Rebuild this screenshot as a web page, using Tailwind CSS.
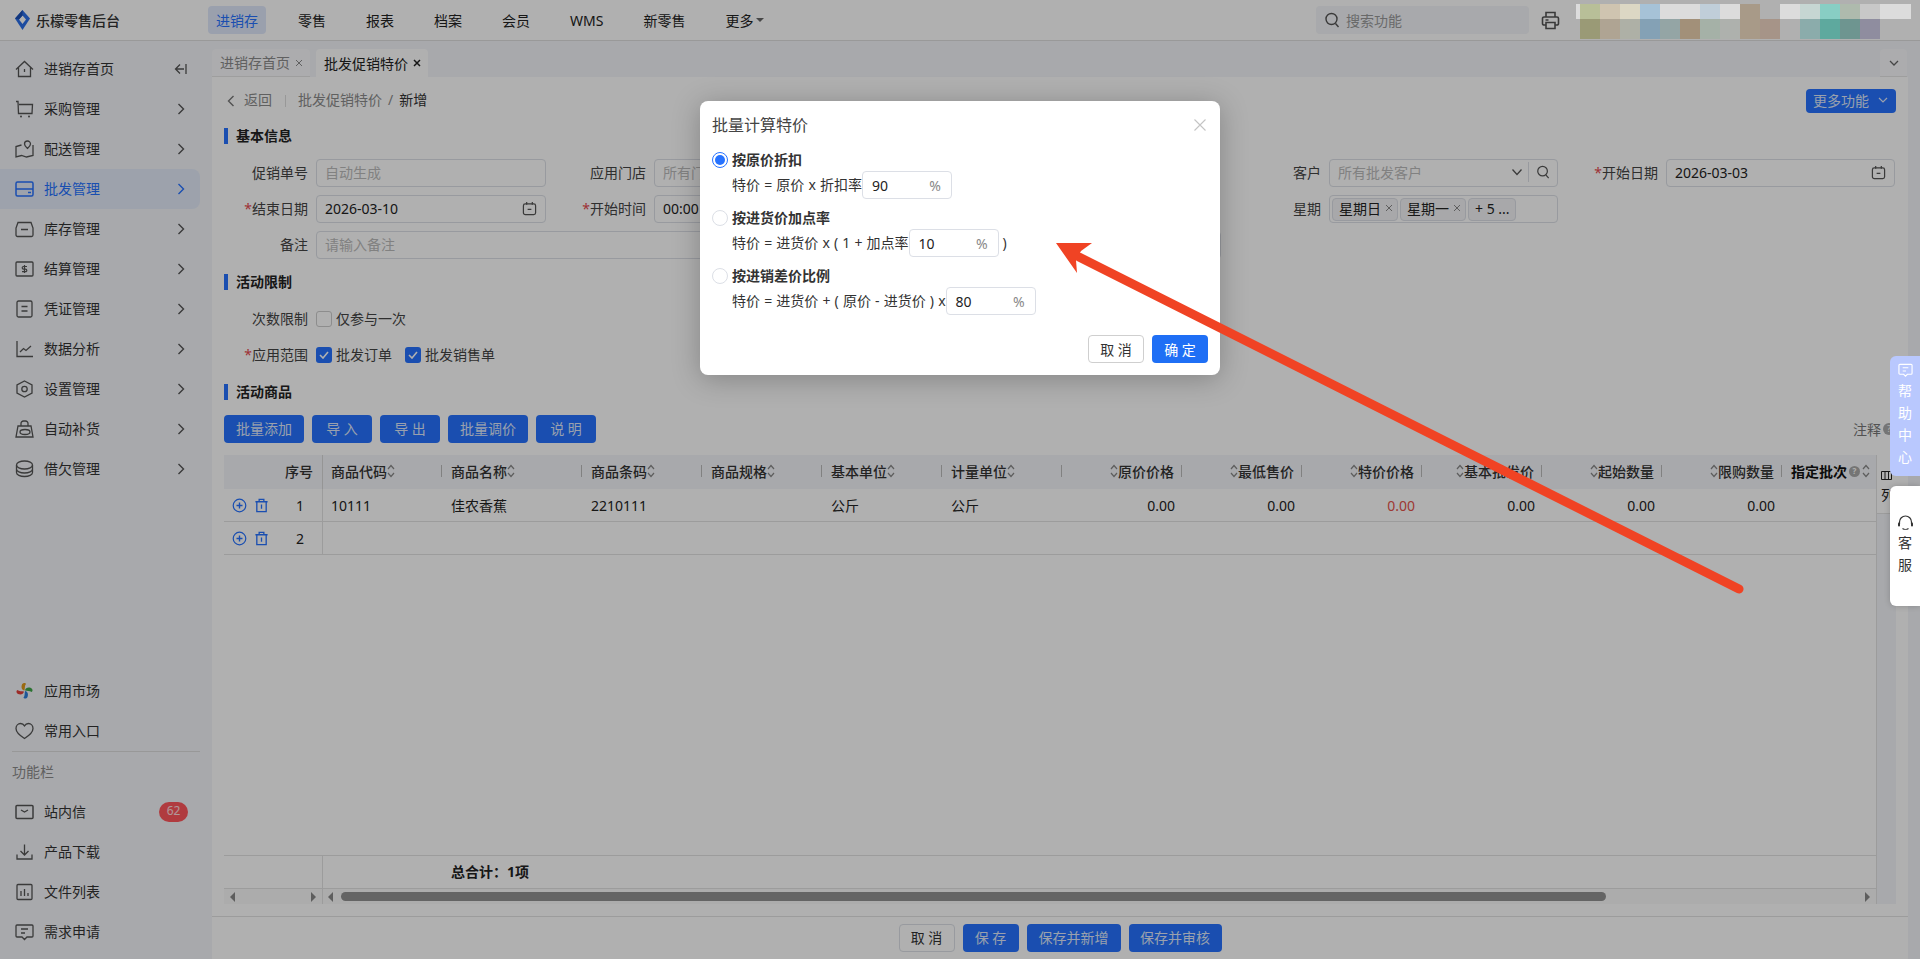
<!DOCTYPE html>
<html lang="zh-CN">
<head>
  <meta charset="UTF-8" />
  <title>批发促销特价</title>
  <script src="https://cdn.jsdelivr.net/npm/@tailwindcss/browser@4"></script>
</head>
<body class="relative w-[1920px] h-[959px] overflow-hidden bg-white text-[14px] text-[#222] font-['Noto_Sans','Noto_Sans_CJK_SC',sans-serif]">

<!-- shared icons -->
<svg class="hidden">
  <symbol id="chev" viewBox="0 0 8 12"><path d="M1.5 1l5 5-5 5" fill="none" stroke="currentColor" stroke-width="1.4"/></symbol>
  <symbol id="sort" viewBox="0 0 8 16"><path d="M1 6l3-3.5L7 6M1 10l3 3.5L7 10" fill="none" stroke="currentColor" stroke-width="1.2"/></symbol>
  <symbol id="cal" viewBox="0 0 16 16"><rect x="1.500" y="3" width="13" height="11.500" rx="2" fill="none" stroke="currentColor" stroke-width="1.300"/><path d="M5 1v3M11 1v3M6 9h4" fill="none" stroke="currentColor" stroke-width="1.300"/></symbol>
  <symbol id="search" viewBox="0 0 16 16"><circle cx="7.500" cy="7" r="5.500" fill="none" stroke="currentColor" stroke-width="1.400"/><path d="M11.500 11.500l3 3.500" fill="none" stroke="currentColor" stroke-width="1.400"/></symbol>
  <symbol id="add" viewBox="0 0 16 16"><circle cx="8" cy="8" r="6.700" fill="none" stroke="currentColor" stroke-width="1.300"/><path d="M8 4.800v6.400M4.800 8h6.400" stroke="currentColor" stroke-width="1.500"/></symbol>
  <symbol id="trash" viewBox="0 0 16 16"><path d="M1.500 4h13M5.500 4V1.500h5V4M3 4v10.500h10V4M8 7v4.500" fill="none" stroke="currentColor" stroke-width="1.400"/></symbol>
  <symbol id="x" viewBox="0 0 8 8"><path d="M1 1l6 6M7 1l-6 6" stroke="currentColor" stroke-width="1"/></symbol>
</svg>

<!-- top bar -->
<header class="h-[41px] border-b border-[#dedede] flex items-center">
  <div class="w-[208px] flex items-center pl-[15px]">
    <svg class="w-[15px] h-5" viewBox="0 0 15 20"><path d="M7.500 0L15 8.500 7.500 20 0 8.500z" fill="#2a6fe8"/><path d="M7.500 5.500L11 9.500 7.500 14 4 9.500z" fill="#fff"/><path d="M7.500 0L0 8.500 4 9.500 7.500 5.500z" fill="#1b4fb5"/></svg>
    <span class="ml-1.5 font-medium text-[#333]">乐檬零售后台</span>
  </div>
  <nav class="flex items-center gap-6">
    <a class="h-7 px-2 flex items-center rounded bg-[#dfe8fb] text-[#2672ff]">进销存</a>
    <a class="px-2">零售</a>
    <a class="px-2">报表</a>
    <a class="px-2">档案</a>
    <a class="px-2">会员</a>
    <a class="px-2">WMS</a>
    <a class="px-2">新零售</a>
    <a class="px-2 flex items-center">更多<span class="ml-[3px] border-x-[4px] border-t-[4px] border-x-transparent border-t-[#666]"></span></a>
  </nav>
  <div class="ml-auto flex items-center mr-[360px]">
    <div class="w-[213px] h-7 rounded bg-[#f3f5f9] flex items-center pl-2 text-[#999]">
      <svg class="w-4 h-4 text-[#555]"><use href="#search"/></svg>
      <span class="ml-1.5">搜索功能</span>
    </div>
    <svg class="w-[19px] h-[19px] ml-3 text-[#555]" viewBox="0 0 19 19"><path d="M5 6V1.500h9V6M5 14H3a1.500 1.500 0 0 1-1.500-1.500V7.500A1.500 1.500 0 0 1 3 6h13a1.500 1.500 0 0 1 1.500 1.500v5A1.500 1.500 0 0 1 16 14h-2M5 11.500h9v6H5zM4.500 9h3" fill="none" stroke="currentColor" stroke-width="1.600"/></svg>
  </div>
</header>

<div class="flex h-[918px]">
  <!-- sidebar -->
  <aside class="w-[212px] shrink-0 bg-[#f3f5f9] pt-2 pb-[7px] flex flex-col text-[#333] [&_a>span]:pb-[2px]">
    <a class="w-[200px] h-10 flex items-center pl-[15px]">
      <svg class="w-[19px] h-[18px] text-[#555]" viewBox="0 0 19 18"><path d="M1 9.500L9.500 1.500 18 9.500M3.500 7.500V16.500h12V7.500M9.500 9v3" fill="none" stroke="currentColor" stroke-width="1.300"/></svg>
      <span class="ml-[10px]">进销存首页</span>
      <svg class="w-[13px] h-3 ml-auto mr-[13px] text-[#555]" viewBox="0 0 13 12"><path d="M12 1v10M10 6H1.500M6 1.500L1.500 6 6 10.500" fill="none" stroke="currentColor" stroke-width="1.300"/></svg>
    </a>
    <a class="w-[200px] h-10 flex items-center pl-[15px]">
      <svg class="w-[19px] h-[18px] text-[#555]" viewBox="0 0 19 18"><path d="M1 1.500h2l.5 12H17l.5-9H4" fill="none" stroke="currentColor" stroke-width="1.300"/><circle cx="6" cy="16.500" r="1" fill="currentColor"/><circle cx="14" cy="16.500" r="1" fill="currentColor"/></svg>
      <span class="ml-[10px]">采购管理</span>
      <svg class="w-2 h-3 ml-auto mr-[15px] text-[#555]"><use href="#chev"/></svg>
    </a>
    <a class="w-[200px] h-10 flex items-center pl-[15px]">
      <svg class="w-[19px] h-[18px] text-[#555]" viewBox="0 0 19 18"><path d="M6.500 5L1 6.500V17l5.500-1.500 5 1.500 6.500-1.500V5" fill="none" stroke="currentColor" stroke-width="1.300"/><path d="M12.500 1a3 3 0 0 1 3 3c0 2-3 4.500-3 4.500s-3-2.500-3-4.500a3 3 0 0 1 3-3z" fill="none" stroke="currentColor" stroke-width="1.300"/></svg>
      <span class="ml-[10px]">配送管理</span>
      <svg class="w-2 h-3 ml-auto mr-[15px] text-[#555]"><use href="#chev"/></svg>
    </a>
    <a class="w-[200px] h-10 flex items-center pl-[15px] rounded-r-lg bg-[#e4ebfa] text-[#2672ff]">
      <svg class="w-[19px] h-[18px]" viewBox="0 0 19 18"><rect x="1" y="2" width="17" height="14" rx="1.500" fill="none" stroke="currentColor" stroke-width="1.500"/><path d="M1 9h17M13 12.500h3" fill="none" stroke="currentColor" stroke-width="1.500"/></svg>
      <span class="ml-[10px]">批发管理</span>
      <svg class="w-2 h-3 ml-auto mr-[15px]"><use href="#chev"/></svg>
    </a>
    <a class="w-[200px] h-10 flex items-center pl-[15px]">
      <svg class="w-[19px] h-[18px] text-[#555]" viewBox="0 0 19 18"><path d="M3 2.500h13L18 8v7a1.500 1.500 0 0 1-1.500 1.500h-14A1.500 1.500 0 0 1 1 15V8zM6 9.500h7" fill="none" stroke="currentColor" stroke-width="1.300"/></svg>
      <span class="ml-[10px]">库存管理</span>
      <svg class="w-2 h-3 ml-auto mr-[15px] text-[#555]"><use href="#chev"/></svg>
    </a>
    <a class="w-[200px] h-10 flex items-center pl-[15px]">
      <svg class="w-[19px] h-[18px] text-[#555]" viewBox="0 0 19 18"><rect x="1" y="2" width="17" height="14" rx="1" fill="none" stroke="currentColor" stroke-width="1.300"/><path d="M12 6.500H8.500a1.300 1.300 0 0 0 0 2.600h2a1.300 1.300 0 0 1 0 2.600H7M9.500 5v8" fill="none" stroke="currentColor" stroke-width="1.200"/></svg>
      <span class="ml-[10px]">结算管理</span>
      <svg class="w-2 h-3 ml-auto mr-[15px] text-[#555]"><use href="#chev"/></svg>
    </a>
    <a class="w-[200px] h-10 flex items-center pl-[15px]">
      <svg class="w-[19px] h-[18px] text-[#555]" viewBox="0 0 19 18"><rect x="2" y="1" width="15" height="16" rx="1.500" fill="none" stroke="currentColor" stroke-width="1.300"/><path d="M6.500 6.500h6M6.500 11h6" stroke="currentColor" stroke-width="1.300"/></svg>
      <span class="ml-[10px]">凭证管理</span>
      <svg class="w-2 h-3 ml-auto mr-[15px] text-[#555]"><use href="#chev"/></svg>
    </a>
    <a class="w-[200px] h-10 flex items-center pl-[15px]">
      <svg class="w-[19px] h-[18px] text-[#555]" viewBox="0 0 19 18"><path d="M2 1v15.500h16M5 12l3.500-3.500 2.500 2 5-4.500" fill="none" stroke="currentColor" stroke-width="1.300"/></svg>
      <span class="ml-[10px]">数据分析</span>
      <svg class="w-2 h-3 ml-auto mr-[15px] text-[#555]"><use href="#chev"/></svg>
    </a>
    <a class="w-[200px] h-10 flex items-center pl-[15px]">
      <svg class="w-[19px] h-[18px] text-[#555]" viewBox="0 0 19 18"><path d="M9.500 1l7.500 4v8l-7.500 4L2 13V5z" fill="none" stroke="currentColor" stroke-width="1.300"/><circle cx="9.500" cy="9" r="2.700" fill="none" stroke="currentColor" stroke-width="1.300"/></svg>
      <span class="ml-[10px]">设置管理</span>
      <svg class="w-2 h-3 ml-auto mr-[15px] text-[#555]"><use href="#chev"/></svg>
    </a>
    <a class="w-[200px] h-10 flex items-center pl-[15px]">
      <svg class="w-[19px] h-[18px] text-[#555]" viewBox="0 0 19 18"><path d="M3 6h13l2 11H1zM6 6V3.500A2.500 2.500 0 0 1 8.500 1h2A2.500 2.500 0 0 1 13 3.500V6" fill="none" stroke="currentColor" stroke-width="1.300"/><ellipse cx="10" cy="12" rx="5" ry="2.500" fill="none" stroke="currentColor" stroke-width="1.300"/></svg>
      <span class="ml-[10px]">自动补货</span>
      <svg class="w-2 h-3 ml-auto mr-[15px] text-[#555]"><use href="#chev"/></svg>
    </a>
    <a class="w-[200px] h-10 flex items-center pl-[15px]">
      <svg class="w-[19px] h-[18px] text-[#555]" viewBox="0 0 19 18"><ellipse cx="9.500" cy="5" rx="8" ry="4" fill="none" stroke="currentColor" stroke-width="1.300"/><path d="M1.500 5v7.500c0 2.300 3.600 4 8 4s8-1.700 8-4V5M1.500 9c0 2.300 3.600 4 8 4s8-1.700 8-4" fill="none" stroke="currentColor" stroke-width="1.300"/></svg>
      <span class="ml-[10px]">借欠管理</span>
      <svg class="w-2 h-3 ml-auto mr-[15px] text-[#555]"><use href="#chev"/></svg>
    </a>

    <a class="w-[200px] h-10 mt-auto flex items-center pl-[15px]">
      <svg class="w-[19px] h-[18px]" viewBox="0 0 19 18"><path d="M9.500 8.500C6.500 8 6 5 7 2.500 8 .5 10.500 .5 11 2c-1.500 1.500-1 4.500-1.500 6.500z" fill="#e09a1a"/><path d="M10 8.500c.5-3 3.500-3.500 6-2.500 2 1 2 3.500.5 4-1.500-1.500-4.500-1-6.500-1.500z" fill="#3fa648"/><path d="M10 9c3 .5 3.500 3.500 2.500 6-1 2-3.500 2-4 .5C10 14 9.500 11 10 9z" fill="#2c7fdc"/><path d="M9 9.500c-.5 3-3.500 3.500-6 2.500-2-1-2-3.500-.5-4C4 9.500 7 9 9 9.500z" fill="#e2403a"/></svg>
      <span class="ml-[10px]">应用市场</span>
    </a>
    <a class="w-[200px] h-10 flex items-center pl-[15px]">
      <svg class="w-[19px] h-[18px] text-[#555]" viewBox="0 0 19 18"><path d="M9.500 16.500C4 13 1 10 1 6.500 1 3.500 3.200 1.500 5.500 1.500c1.700 0 3.100.8 4 2.300.9-1.500 2.300-2.300 4-2.300 2.300 0 4.500 2 4.500 5 0 3.500-3 6.500-8.500 10z" fill="none" stroke="currentColor" stroke-width="1.300"/></svg>
      <span class="ml-[10px]">常用入口</span>
    </a>
    <div class="ml-3 w-[188px] border-t border-[#dcdcdc]"></div>
    <div class="h-10 pl-3 pb-[2px] flex items-center text-[#8b8b8b]">功能栏</div>
    <a class="w-[200px] h-10 flex items-center pl-[15px]">
      <svg class="w-[19px] h-[18px] text-[#555]" viewBox="0 0 19 18"><rect x="1" y="2.500" width="17" height="13" rx="1" fill="none" stroke="currentColor" stroke-width="1.500"/><path d="M6 7l3.500 2L13 7" fill="none" stroke="currentColor" stroke-width="1.300"/></svg>
      <span class="ml-[10px]">站内信</span>
      <span class="ml-auto mr-3 w-[29px] h-5 rounded-full bg-[#ff565c] text-white/80 text-[12px] flex items-center justify-center">62</span>
    </a>
    <a class="w-[200px] h-10 flex items-center pl-[15px]">
      <svg class="w-[19px] h-[18px] text-[#555]" viewBox="0 0 19 18"><path d="M9.500 1.500v10M5.500 8l4 4 4-4M2 11.500v4.500h15v-4.500" fill="none" stroke="currentColor" stroke-width="1.300"/></svg>
      <span class="ml-[10px]">产品下载</span>
    </a>
    <a class="w-[200px] h-10 flex items-center pl-[15px]">
      <svg class="w-[19px] h-[18px] text-[#555]" viewBox="0 0 19 18"><rect x="2" y="1.500" width="15" height="15" rx="1" fill="none" stroke="currentColor" stroke-width="1.300"/><path d="M6 8v5M9.500 6v7M13 10v3" stroke="currentColor" stroke-width="1.300"/></svg>
      <span class="ml-[10px]">文件列表</span>
    </a>
    <a class="w-[200px] h-10 flex items-center pl-[15px]">
      <svg class="w-[19px] h-[18px] text-[#555]" viewBox="0 0 19 18"><path d="M2 2h15a1 1 0 0 1 1 1v10a1 1 0 0 1-1 1h-5l-2.500 2.500L7 14H2a1 1 0 0 1-1-1V3a1 1 0 0 1 1-1zM6 6h7M6 10h4" fill="none" stroke="currentColor" stroke-width="1.300"/></svg>
      <span class="ml-[10px]">需求申请</span>
    </a>
  </aside>

  <main class="flex-1 min-w-0 flex flex-col">
    <!-- tabs -->
    <div class="h-9 shrink-0 bg-[#f3f5f9] pt-2 flex">
      <div class="w-[98px] flex items-center pl-2 bg-[#f9f9fc] border-b border-[#e5e5e5] rounded-t text-[#8b8b8b]">进销存首页
        <svg class="w-2 h-2 ml-[5px]"><use href="#x"/></svg>
      </div>
      <div class="w-[112px] ml-1.5 flex items-center pl-2 bg-white rounded-t">批发促销特价
        <svg class="w-2 h-2 ml-[5px]" viewBox="0 0 8 8"><path d="M1 1l6 6M7 1l-6 6" stroke="currentColor" stroke-width="1.500"/></svg>
      </div>
      <div class="ml-auto mr-[13px] w-[27px] bg-[#f9f9fc] border-b border-[#e5e5e5] rounded-t flex items-center justify-center">
        <svg class="w-3 h-2 text-[#666]" viewBox="0 0 12 8"><path d="M2 2l4 4 4-4" fill="none" stroke="currentColor" stroke-width="1.300"/></svg>
      </div>
    </div>

    <div class="flex-1 min-h-0 flex">
      <div class="flex-1 min-w-0 flex flex-col [&_button]:pb-[2px]">
        <div class="flex-1 min-h-0 px-3 pt-3 flex flex-col">
          <!-- breadcrumb -->
          <div class="h-6 shrink-0 flex items-center text-[#8c8c8c] [&>span]:pb-[3px]">
            <svg class="w-2 h-3 ml-[3px] rotate-180 text-[#777]"><use href="#chev"/></svg>
            <span class="ml-[9px]">返回</span>
            <span class="ml-[13px] h-3 border-l border-[#ddd]"></span>
            <span class="ml-[12px]">批发促销特价</span>
            <span class="ml-[6px]">/</span>
            <span class="ml-[6px] text-[#333]">新增</span>
            <button class="ml-auto w-[90px] h-6 rounded bg-[#2672ff] text-[#dfe8fb] flex items-center justify-center">更多功能
              <svg class="w-3 h-2 ml-2" viewBox="0 0 12 8"><path d="M2 2l4 4 4-4" fill="none" stroke="currentColor" stroke-width="1.200"/></svg>
            </button>
          </div>

          <!-- basic info -->
          <div class="mt-[15px] h-4 shrink-0 border-l-4 border-[#2672ff] pl-2 pb-[2px] flex items-center font-bold">基本信息</div>
          <div class="mt-[15px] shrink-0 grid grid-cols-[322px_338px_337px_337px_337px] auto-rows-[28px] gap-y-2 [&_label]:pb-[2px]">
            <div class="flex items-center">
              <label class="flex-1 text-right pr-2 text-[#444]">促销单号</label>
              <div class="w-[230px] h-7 border border-[#dcdfe6] rounded flex items-center px-2 pb-[2px] text-[#bbb]">自动生成</div>
            </div>
            <div class="flex items-center">
              <label class="flex-1 text-right pr-2 text-[#444]">应用门店</label>
              <div class="w-[230px] h-7 border border-[#dcdfe6] rounded flex items-center px-2 pb-[2px] text-[#bbb]">所有门店</div>
            </div>
            <div></div>
            <div class="flex items-center">
              <label class="flex-1 text-right pr-2 text-[#444]">客户</label>
              <div class="w-[229px] h-7 border border-[#dcdfe6] rounded flex items-center pl-2 pb-[2px] text-[#bbb]">所有批发客户
                <svg class="w-3 h-2 ml-auto text-[#555]" viewBox="0 0 12 8"><path d="M1.500 1.500l4.500 5 4.500-5" fill="none" stroke="currentColor" stroke-width="1.300"/></svg>
                <span class="h-5 ml-[5px] border-l border-[#dcdfe6]"></span>
                <svg class="w-[14px] h-[14px] mx-[7px] text-[#555]"><use href="#search"/></svg>
              </div>
            </div>
            <div class="flex items-center">
              <label class="flex-1 text-right pr-2 text-[#444]"><span class="text-[#e5484d]">*</span>开始日期</label>
              <div class="w-[229px] h-7 border border-[#dcdfe6] rounded flex items-center pl-2 pr-2 pb-[2px]">2026-03-03
                <svg class="w-[15px] h-[15px] ml-auto text-[#555]"><use href="#cal"/></svg>
              </div>
            </div>

            <div class="flex items-center">
              <label class="flex-1 text-right pr-2 text-[#444]"><span class="text-[#e5484d]">*</span>结束日期</label>
              <div class="w-[230px] h-7 border border-[#dcdfe6] rounded flex items-center pl-2 pr-2 pb-[2px]">2026-03-10
                <svg class="w-[15px] h-[15px] ml-auto text-[#555]"><use href="#cal"/></svg>
              </div>
            </div>
            <div class="flex items-center">
              <label class="flex-1 text-right pr-2 text-[#444]"><span class="text-[#e5484d]">*</span>开始时间</label>
              <div class="w-[230px] h-7 border border-[#dcdfe6] rounded flex items-center px-2 pb-[2px]">00:00</div>
            </div>
            <div></div>
            <div class="flex items-center">
              <label class="flex-1 text-right pr-2 text-[#444]">星期</label>
              <div class="w-[229px] h-7 border border-[#dcdfe6] rounded flex items-center gap-[2px] pl-[2px]">
                <span class="w-[66px] h-[23px] shrink-0 whitespace-nowrap border border-[#dcdfe6] rounded bg-[#f3f4f6] flex items-center pl-[6px] pb-[2px]">星期日<svg class="w-2 h-2 ml-1 text-[#888]"><use href="#x"/></svg></span>
                <span class="w-[66px] h-[23px] shrink-0 whitespace-nowrap border border-[#dcdfe6] rounded bg-[#f3f4f6] flex items-center pl-[6px] pb-[2px]">星期一<svg class="w-2 h-2 ml-1 text-[#888]"><use href="#x"/></svg></span>
                <span class="w-[48px] h-[23px] shrink-0 whitespace-nowrap border border-[#dcdfe6] rounded bg-[#f3f4f6] flex items-center pl-[6px] pb-[2px]">+ 5 ...</span>
              </div>
            </div>
            <div></div>

            <div class="col-span-3 flex items-center">
              <label class="w-[92px] text-right pr-2 text-[#444]">备注</label>
              <div class="flex-1 h-7 border border-[#dcdfe6] rounded flex items-center px-2 pb-[2px] text-[#bbb]">请输入备注</div>
            </div>
          </div>

          <!-- limits -->
          <div class="mt-[15px] h-4 shrink-0 border-l-4 border-[#2672ff] pl-2 pb-[2px] flex items-center font-bold">活动限制</div>
          <div class="mt-[15px] h-7 shrink-0 flex items-center">
            <label class="w-[92px] pb-[2px] text-right pr-2 text-[#444]">次数限制</label>
            <span class="w-4 h-4 border border-[#ccc] rounded-[3px]"></span>
            <span class="ml-1 pb-[2px] text-[#444]">仅参与一次</span>
          </div>
          <div class="mt-2 h-7 shrink-0 flex items-center">
            <label class="w-[92px] pb-[2px] text-right pr-2 text-[#444]"><span class="text-[#e5484d]">*</span>应用范围</label>
            <span class="w-4 h-4 rounded-[3px] bg-[#2672ff] flex items-center justify-center">
              <svg class="w-[10px] h-2" viewBox="0 0 10 8"><path d="M1 4l3 3 5-6" fill="none" stroke="#fff" stroke-width="1.600"/></svg>
            </span>
            <span class="ml-1 pb-[2px] text-[#444]">批发订单</span>
            <span class="ml-[13px] w-4 h-4 rounded-[3px] bg-[#2672ff] flex items-center justify-center">
              <svg class="w-[10px] h-2" viewBox="0 0 10 8"><path d="M1 4l3 3 5-6" fill="none" stroke="#fff" stroke-width="1.600"/></svg>
            </span>
            <span class="ml-1 pb-[2px] text-[#444]">批发销售单</span>
          </div>

          <!-- goods -->
          <div class="mt-[15px] h-4 shrink-0 border-l-4 border-[#2672ff] pl-2 pb-[2px] flex items-center font-bold">活动商品</div>
          <div class="mt-[15px] h-7 shrink-0 flex items-center gap-2 text-[#dfe8fb]">
            <button class="w-20 h-7 rounded bg-[#2672ff]">批量添加</button>
            <button class="w-[60px] h-7 rounded bg-[#2672ff]">导 入</button>
            <button class="w-[60px] h-7 rounded bg-[#2672ff]">导 出</button>
            <button class="w-20 h-7 rounded bg-[#2672ff]">批量调价</button>
            <button class="w-[60px] h-7 rounded bg-[#2672ff]">说 明</button>
            <span class="ml-auto text-[#777]">注释</span>
            <span class="-ml-[6px] mr-px w-3 h-3 rounded-full bg-[#aaa] text-white text-[9px] flex items-center justify-center">?</span>
          </div>

          <!-- table -->
          <div class="mt-3 flex-1 min-h-0 flex">
            <div class="flex-1 min-w-0 flex flex-col">
              <div id="tableHead" class="h-[34px] shrink-0 bg-[#f3f5f9] grid grid-cols-[99px_119px_140px_repeat(10,120px)_94px] font-medium text-[#333] [&>div]:pb-[2px]"></div>
              <div id="tableRows"></div>
              <div class="flex-1"></div>
              <div class="h-[33px] shrink-0 border-t border-[#e3e3e3] flex items-center">
                <div class="w-[99px] h-full border-r border-[#e3e3e3]"></div>
                <div class="ml-[128px] pb-[2px] font-bold text-[#222]">总合计：1项</div>
              </div>
              <div class="h-4 shrink-0 border-t border-[#e3e3e3] flex items-center bg-[#fafafa]">
                <div class="w-[99px] h-full border-r border-[#e3e3e3] flex items-center justify-between px-[6px]">
                  <span class="border-y-[5px] border-r-[5px] border-y-transparent border-r-[#888]"></span>
                  <span class="border-y-[5px] border-l-[5px] border-y-transparent border-l-[#888]"></span>
                </div>
                <span class="ml-[5px] border-y-[5px] border-r-[5px] border-y-transparent border-r-[#888]"></span>
                <div class="ml-2 w-[1265px] h-[9px] rounded-full bg-[#919191]"></div>
                <span class="ml-auto mr-[6px] border-y-[5px] border-l-[5px] border-y-transparent border-l-[#888]"></span>
              </div>
            </div>
            <div class="w-5 shrink-0 border-l border-[#e3e3e3] flex flex-col">
              <div class="h-[59px] border-b border-[#e3e3e3] pt-4 pl-1 leading-[20px] text-[#222]">
                <svg class="w-[11px] h-[9px]" viewBox="0 0 11 9"><path d="M.500 .500h10v8h-10zM4 .500v8M7.500 .500v8" fill="none" stroke="currentColor"/></svg>
                <div class="mt-[5px] w-4 overflow-hidden">列</div>
              </div>
              <div class="flex-1 bg-[#f3f5f9]"></div>
            </div>
          </div>
        </div>
        <div class="h-3 shrink-0"></div>
        <!-- actions -->
        <div class="h-[43px] shrink-0 border-t border-[#e3e3e3] pt-[7px] flex justify-center gap-2 text-[#dfe8fb]">
          <button class="w-14 h-7 rounded border border-[#dcdfe6] text-[#333]">取 消</button>
          <button class="w-14 h-7 rounded bg-[#2672ff]">保 存</button>
          <button class="w-[94px] h-7 rounded bg-[#2672ff]">保存并新增</button>
          <button class="w-[93px] h-7 rounded bg-[#2672ff]">保存并审核</button>
        </div>
      </div>
      <div class="w-3 shrink-0 bg-[#f3f5f9]"></div>
    </div>
  </main>
</div>

<!-- overlay -->
<div class="absolute inset-0 z-10 bg-black/[.31]"></div>

<!-- modal -->
<div class="absolute z-20 left-[700px] top-[101px] w-[520px] h-[274px] bg-white rounded-lg shadow-[0_4px_28px_rgba(0,0,0,.25)] px-3 text-[#333]">
  <div class="h-12 flex items-center justify-between">
    <span class="text-[16px] text-[#444]">批量计算特价</span>
    <svg class="w-3 h-3 mr-[2px]" viewBox="0 0 12 12"><path d="M.500 .500l11 11M11.500 .500l-11 11" stroke="#c4c4c4" stroke-width="1.100"/></svg>
  </div>
  <div class="h-[22px] flex items-center font-bold">
    <span class="w-4 h-4 rounded-full border border-[#2672ff] flex items-center justify-center"><span class="w-2.5 h-2.5 rounded-full bg-[#2672ff]"></span></span>
    <span class="ml-1 pb-[2px]">按原价折扣</span>
  </div>
  <div class="h-7 pl-5 flex items-center [word-spacing:0.5px]">
    <span class="pb-[2px]">特价 = 原价 x 折扣率</span>
    <div class="w-[90px] h-7 border border-[#dcdfe6] rounded flex items-center px-[9px] text-[#222]">90<span class="ml-auto mr-[1px] text-[#888]">%</span></div>
  </div>
  <div class="mt-2 h-[22px] flex items-center font-bold">
    <span class="w-4 h-4 rounded-full border border-[#dcdfe6]"></span>
    <span class="ml-1 pb-[2px]">按进货价加点率</span>
  </div>
  <div class="h-7 pl-5 flex items-center [word-spacing:0.5px]">
    <span class="pb-[2px]">特价 = 进货价 x ( 1 + 加点率</span>
    <div class="w-[90px] h-7 border border-[#dcdfe6] rounded flex items-center px-[9px] text-[#222]">10<span class="ml-auto mr-[1px] text-[#888]">%</span></div>
    <span class="ml-[4px] pb-[2px]">)</span>
  </div>
  <div class="mt-2 h-[22px] flex items-center font-bold">
    <span class="w-4 h-4 rounded-full border border-[#dcdfe6]"></span>
    <span class="ml-1 pb-[2px]">按进销差价比例</span>
  </div>
  <div class="h-7 pl-5 flex items-center [word-spacing:0.5px]">
    <span class="pb-[2px]">特价 = 进货价 + ( 原价 - 进货价 ) x</span>
    <div class="w-[90px] h-7 border border-[#dcdfe6] rounded flex items-center px-[9px] text-[#222]">80<span class="ml-auto mr-[1px] text-[#888]">%</span></div>
  </div>
  <div class="mt-5 flex justify-end gap-2">
    <button class="w-14 h-7 rounded border border-[#cfcfcf]">取 消</button>
    <button class="w-14 h-7 rounded bg-[#1f6ff5] text-white">确 定</button>
  </div>
</div>

<!-- side widgets -->
<div class="absolute z-30 left-[1890px] top-[356px] w-[30px] h-[120px] rounded-l-md bg-[#b9c8fe] text-white flex flex-col items-center pt-[7px]">
  <svg class="w-[15px] h-[15px]" viewBox="0 0 16 16"><path d="M2 1.500h12a1 1 0 0 1 1 1v8.500a1 1 0 0 1-1 1h-4l-2 2-2-2H2a1 1 0 0 1-1-1V2.500a1 1 0 0 1 1-1zM5 5h6M5 8.500h3.500" fill="none" stroke="currentColor" stroke-width="1.200"/></svg>
  <div class="mt-[2px] leading-[22px]">帮<br>助<br>中<br>心</div>
</div>
<div class="absolute z-30 left-[1890px] top-[486px] w-[30px] h-[120px] rounded-l-md bg-white shadow-[0_0_6px_rgba(0,0,0,.2)] text-[#333] flex flex-col items-center pt-[29px]">
  <svg class="w-[17px] h-[17px]" viewBox="0 0 17 17"><path d="M2.500 9V7a6 6 0 0 1 12 0v2M5.500 13.500c1.500 1 4.500 1 6 0" fill="none" stroke="currentColor" stroke-width="1.200"/><rect x="1" y="7.500" width="2" height="4" rx="1" fill="currentColor"/><rect x="14" y="7.500" width="2" height="4" rx="1" fill="currentColor"/></svg>
  <div class="leading-[22px]">客<br>服</div>
</div>

<!-- redacted account area -->
<div class="absolute z-30 left-[1576px] top-1 grid grid-cols-[4px_repeat(15,20px)_31px] grid-rows-[15px_20px]">
  <i class="bg-[#dcdcdc]"></i><i class="bg-[#b8bf98]"></i><i class="bg-[#cfc4b0]"></i><i class="bg-[#dcd7c4]"></i><i class="bg-[#a6c2d7]"></i><i class="bg-[#dcdcdc]"></i><i class="bg-[#dcdcdc]"></i><i class="bg-[#c0ced9]"></i><i class="bg-[#dcdcdc]"></i><i class="bg-[#a89a88]"></i><i class="bg-[#b0b0b0]"></i><i class="bg-[#dcdcdc]"></i><i class="bg-[#c6d6d3]"></i><i class="bg-[#88cec4]"></i><i class="bg-[#aebaad]"></i><i class="bg-[#c8c8c8]"></i><i class="bg-[#dcdcdc]"></i>
  <i class="bg-[#b0b0b0]"></i><i class="bg-[#9a9a76]"></i><i class="bg-[#afa493]"></i><i class="bg-[#aeb0a6]"></i><i class="bg-[#84a1b5]"></i><i class="bg-[#94a5a5]"></i><i class="bg-[#a29079]"></i><i class="bg-[#a5b1a7]"></i><i class="bg-[#aeb1ad]"></i><i class="bg-[#a89a88]"></i><i class="bg-[#a69488]"></i><i class="bg-[#b0b0b0]"></i><i class="bg-[#8bacab]"></i><i class="bg-[#5ea99e]"></i><i class="bg-[#6e9590]"></i><i class="bg-[#8f8d9f]"></i><i class="bg-[#b0b0b0]"></i>
</div>

<!-- annotation arrow -->
<svg class="absolute z-40 left-0 top-0 pointer-events-none" width="1920" height="959">
  <line x1="1079" y1="257" x2="1739" y2="589" stroke="#f04324" stroke-width="9" stroke-linecap="round"/>
  <path d="M1056 243H1092L1081 251 1076 260 1077 273z" fill="#f04324"/>
</svg>

<script>
  const sortIcon = '<svg class="w-2 h-4 text-[#888] shrink-0"><use href="#sort"/></svg>';
  const sep = '<i class="h-3 border-r border-[#bbb] shrink-0"></i>';

  const leftCols = ['商品代码', '商品名称', '商品条码', '商品规格', '基本单位', '计量单位'];
  const rightCols = ['原价价格', '最低售价', '特价价格', '基本批发价', '起始数量', '限购数量'];

  let head = '<div class="flex items-center justify-end pr-[9px] border-r border-[#d8d8d8]">序号</div>';
  leftCols.forEach((c, i) => {
    head += `<div class="flex items-center ${i === 0 ? 'pl-2' : 'pl-[9px]'}"><span>${c}</span>${sortIcon}<span class="flex-1"></span>${sep}</div>`;
  });
  rightCols.forEach(c => {
    head += `<div class="flex items-center justify-end">${sortIcon}<span class="mr-[7px] whitespace-nowrap">${c}</span>${sep}</div>`;
  });
  head += `<div class="flex items-center pl-[9px] font-bold text-[#111]">指定批次<span class="ml-[2px] w-[11px] h-[11px] rounded-full bg-[#aaa] text-white text-[8px] flex items-center justify-center">?</span><span class="ml-[2px]">${sortIcon}</span></div>`;
  document.getElementById('tableHead').innerHTML = head;

  const actions = `<svg class="w-[15px] h-[15px] text-[#2672ff]"><use href="#add"/></svg><svg class="ml-[7px] w-[15px] h-[15px] text-[#2672ff]"><use href="#trash"/></svg>`;
  const leftCell = (t, i) => `<div class="flex items-center ${i === 0 ? 'pl-2' : 'pl-[9px]'}">${t}</div>`;
  const numCell = (t, red) => `<div class="flex items-center justify-end pr-[7px] ${red ? 'text-[#e5534b]' : ''}">${t}</div>`;

  const row1 = ['10111', '佳农香蕉', '2210111', '', '公斤', '公斤'].map(leftCell).join('')
    + [0, 1, 2, 3, 4, 5].map(i => numCell('0.00', i === 2)).join('') + '<div></div>';

  function rowHtml(n, cells) {
    return `<div class="h-[33px] border-b border-[#e3e3e3] grid grid-cols-[99px_119px_140px_repeat(10,120px)_94px]">
      <div class="relative flex items-center pl-2 border-r border-[#e3e3e3]">${actions}<span class="absolute left-[72px] w-2 text-center">${n}</span></div>${cells}</div>`;
  }
  document.getElementById('tableRows').innerHTML = rowHtml(1, row1) + rowHtml(2, '');
</script>
</body>
</html>
